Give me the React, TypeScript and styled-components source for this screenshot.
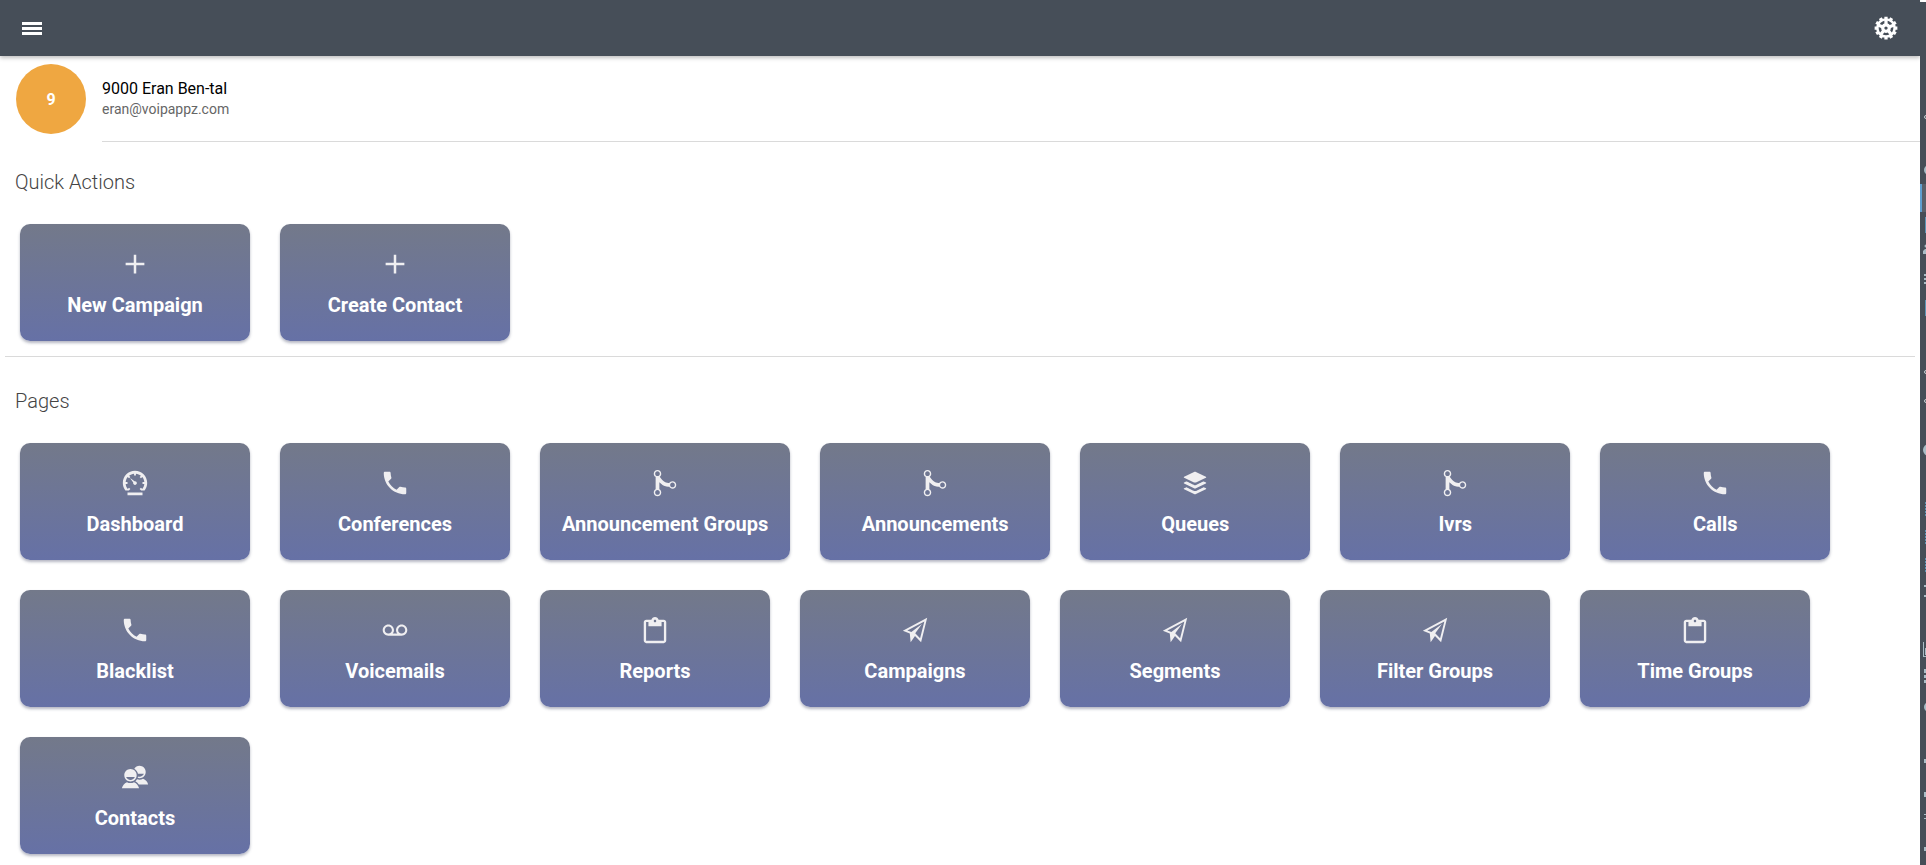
import React from 'react';
import styled, { createGlobalStyle, css } from 'styled-components';
import type { IconType } from 'react-icons';
import {
  IoLogoBuffer,
  IoMdAdd,
  IoMdCall,
  IoMdClipboard,
  IoMdCog,
  IoMdContacts,
  IoMdGitMerge,
  IoMdPaperPlane,
  IoMdRecording,
  IoMdSpeedometer,
} from 'react-icons/io';

const GlobalStyle = createGlobalStyle`
  *, *::before, *::after { box-sizing: border-box; }
  body {
    margin: 0;
    background: #fff;
    color: #000;
    font-family: Roboto, "Liberation Sans", sans-serif;
  }
`;

const Shell = styled.div`
  display: flex;
  min-height: 100vh;
`;

const Page = styled.div`
  flex: 1;
  min-width: 0;
`;

const Toolbar = styled.header`
  display: flex;
  align-items: center;
  justify-content: space-between;
  height: 56px;
  padding: 0 21px 0 19px;
  background: #464e58;
  box-shadow: 0 2px 4px rgba(0, 0, 0, 0.25);
`;

const ToolbarButton = styled.button`
  display: flex;
  padding: 0;
  border: 0;
  background: none;
  color: #fff;
  font-size: 26px;
  cursor: pointer;
`;

const Profile = styled.section`
  display: flex;
  gap: 16px;
  padding: 8px 0 0 16px;
`;

const Avatar = styled.div`
  display: flex;
  align-items: center;
  justify-content: center;
  flex: none;
  width: 70px;
  height: 70px;
  border-radius: 50%;
  background: #efa741;
  color: #fff;
  font-size: 16px;
  font-weight: 700;
`;

const ProfileText = styled.div`
  flex: 1;
  height: 78px;
  padding-top: 14px;
  border-bottom: 1px solid #dadada;
`;

const Name = styled.h1`
  margin: 0;
  font-size: 16px;
  line-height: 21px;
  font-weight: 400;
`;

const Email = styled.p`
  margin: 0;
  color: #666;
  font-size: 14px;
  line-height: 20px;
`;

const Content = styled.main`
  padding: 0 5px 8px;
`;

const Section = styled.section`
  padding: 28px 15px 15px;

  & + & {
    padding-top: 32px;
    border-top: 1px solid #dadada;
  }
`;

const SectionTitle = styled.h2`
  margin: 0 0 30px -5px;
  color: #444;
  font-size: 20px;
  line-height: 24px;
  font-weight: 300;
`;

const Tiles = styled.div`
  display: flex;
  flex-wrap: wrap;
  gap: 30px;
`;

const tile = css`
  display: flex;
  flex-direction: column;
  align-items: center;
  gap: 14px;
  min-width: 230px;
  padding: 25px 22px 24px;
  border: 0;
  border-radius: 10px;
  background: linear-gradient(#73798a, #6671a6);
  box-shadow: 0 2px 3px rgba(40, 45, 80, 0.35);
  color: #fff;
  font-family: inherit;
  font-size: 20px;
  line-height: 24px;
  font-weight: 700;
  text-decoration: none;
  cursor: pointer;

  svg {
    width: 30px;
    height: 30px;
    color: #f0eff1;
  }
`;

const ActionTile = styled.button`
  ${tile}
`;

const PageTile = styled.a`
  ${tile}
`;

const Rail = styled.aside`
  flex: none;
  width: 6px;
  margin-top: 2px;
  overflow: hidden;
  background: #464e58;

  svg {
    display: block;
  }
`;

const actions: { label: string; icon: IconType }[] = [
  { label: 'New Campaign', icon: IoMdAdd },
  { label: 'Create Contact', icon: IoMdAdd },
];

const pages: { label: string; icon: IconType }[] = [
  { label: 'Dashboard', icon: IoMdSpeedometer },
  { label: 'Conferences', icon: IoMdCall },
  { label: 'Announcement Groups', icon: IoMdGitMerge },
  { label: 'Announcements', icon: IoMdGitMerge },
  { label: 'Queues', icon: IoLogoBuffer },
  { label: 'Ivrs', icon: IoMdGitMerge },
  { label: 'Calls', icon: IoMdCall },
  { label: 'Blacklist', icon: IoMdCall },
  { label: 'Voicemails', icon: IoMdRecording },
  { label: 'Reports', icon: IoMdClipboard },
  { label: 'Campaigns', icon: IoMdPaperPlane },
  { label: 'Segments', icon: IoMdPaperPlane },
  { label: 'Filter Groups', icon: IoMdPaperPlane },
  { label: 'Time Groups', icon: IoMdClipboard },
  { label: 'Contacts', icon: IoMdContacts },
];

const MenuIcon = () => (
  <svg width="26" height="26" viewBox="0 0 26 26" fill="currentColor" aria-hidden="true">
    <path d="M3 7h20v3H3zM3 12h20v3H3zM3 17h20v3H3z" />
  </svg>
);

/* Edge of the collapsed side menu: only the left rim of each icon shows. */
const RailIcons = () => (
  <svg width="6" height="863" viewBox="0 2 6 863" aria-hidden="true">
    <rect x="0" y="184" width="6" height="28" fill="#5b606a" />
    <rect x="0" y="184" width="2" height="28" fill="#5f9fd0" />
    <g fill="#5d94b5">
      <rect x="5" y="217" width="1" height="16" />
      <rect x="5" y="300" width="1" height="16" />
    </g>
    <g stroke="#5d94b5" strokeWidth="1" strokeDasharray="2 1">
      <path d="M5.5 502v14M5.5 530v14M5.5 558v14" />
    </g>
    <g fill="#a9bcc6">
      <circle cx="9" cy="170" r="5" />
      <circle cx="6" cy="246" r="1.5" />
      <path d="M3 254v-3l2-2h1v5z" />
      <path d="M4 274h2v2H4zM4 278h2v2H4zM4 282h2v2H4z" />
      <circle cx="9" cy="450" r="6" />
      <path d="M4 585h2v2H4zM4 595h2v2H4z" />
      <path d="M3 642h1v14h2v1H3zM5 648h1v7H5z" />
      <path d="M4 669h2v4H4zM4 675h2v3H4zM4 680h2v3H4z" />
      <circle cx="9" cy="707" r="5" />
      <path d="M4 759h2v4H4zM4 792h2v5H4zM4 847h2v4H4z" />
      <path d="M4 814h2v1H4zM4 818h2v1H4z" />
    </g>
    <g fill="none" stroke="#c8ced3">
      <circle cx="6" cy="117" r="1.5" />
      <circle cx="6" cy="372" r="1.5" />
      <circle cx="6" cy="401" r="1.5" />
    </g>
  </svg>
);

export default function App() {
  return (
    <>
      <GlobalStyle />
      <Shell>
        <Page>
          <Toolbar>
            <ToolbarButton type="button" aria-label="Menu">
              <MenuIcon />
            </ToolbarButton>
            <ToolbarButton type="button" aria-label="Settings">
              <IoMdCog />
            </ToolbarButton>
          </Toolbar>
          <Profile>
            <Avatar>9</Avatar>
            <ProfileText>
              <Name>9000 Eran Ben-tal</Name>
              <Email>eran@voipappz.com</Email>
            </ProfileText>
          </Profile>
          <Content>
            <Section>
              <SectionTitle>Quick Actions</SectionTitle>
              <Tiles>
                {actions.map(({ label, icon: Icon }) => (
                  <ActionTile key={label} type="button">
                    <Icon />
                    {label}
                  </ActionTile>
                ))}
              </Tiles>
            </Section>
            <Section>
              <SectionTitle>Pages</SectionTitle>
              <Tiles>
                {pages.map(({ label, icon: Icon }) => (
                  <PageTile key={label} href="#">
                    <Icon />
                    {label}
                  </PageTile>
                ))}
              </Tiles>
            </Section>
          </Content>
        </Page>
        <Rail>
          <RailIcons />
        </Rail>
      </Shell>
    </>
  );
}
